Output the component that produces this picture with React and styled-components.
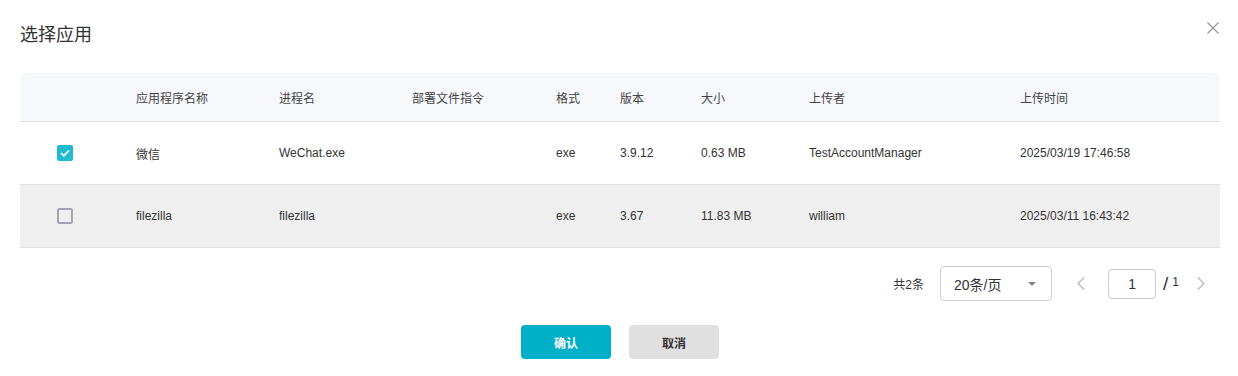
import styled, { createGlobalStyle } from "styled-components";

const GlobalStyle = createGlobalStyle`
  body {
    margin: 0;
    background: #ffffff;
    font-family: "Liberation Sans", Arial, "Noto Sans CJK SC", sans-serif;
    color: #333333;
  }
`;

const Dialog = styled.div`
  width: 1238px;
  box-sizing: border-box;
  padding: 20px 18px 0 20px;
`;

const DialogHeader = styled.div`
  display: flex;
  justify-content: space-between;
  align-items: flex-start;
  margin-bottom: 23px;
`;

const Title = styled.h2`
  margin: 0;
  font-size: 18px;
  font-weight: 400;
  line-height: 30px;
  color: #333333;
`;

const CloseButton = styled.button`
  margin: 2px 1px 0 0;
  padding: 0;
  border: none;
  background: none;
  width: 12px;
  height: 12px;
  display: flex;
  cursor: pointer;
`;

const cols = "116px 143px 133px 144px 64px 81px 108px 211px 1fr";

const Table = styled.div`
  width: 1200px;
  font-size: 12px;
`;

const HeadRow = styled.div`
  display: grid;
  grid-template-columns: ${cols};
  align-items: center;
  height: 48px;
  background: #f7f8fc;
  border-radius: 8px 8px 0 0;
  border-bottom: 1px solid #e0e0e0;
  color: #444444;
`;

const Row = styled.div`
  display: grid;
  grid-template-columns: ${cols};
  align-items: center;
  height: 62px;
  border-bottom: 1px solid #e0e0e0;
  background: ${(p) => (p.$hover ? "#efefef" : "#ffffff")};
  color: #333333;
`;

const CheckCell = styled.div`
  display: flex;
  padding-left: 37px;
`;

const Check = styled.span`
  width: 16px;
  height: 16px;
  box-sizing: border-box;
  border-radius: 2px;
  display: flex;
  align-items: center;
  justify-content: center;
  background: ${(p) => (p.$checked ? "#22bad3" : "transparent")};
  border: ${(p) => (p.$checked ? "none" : "2px solid #a3a3b3")};
`;

const Cell = styled.div`
  white-space: nowrap;
`;

const Pager = styled.div`
  display: flex;
  justify-content: flex-end;
  align-items: center;
  margin-top: 18px;
  padding-right: 15px;
  height: 35px;
  font-size: 12px;
`;

const Total = styled.span`
  margin-right: 16px;
  color: #333333;
`;

const Select = styled.div`
  width: 112px;
  height: 35px;
  box-sizing: border-box;
  border: 1px solid #cccccc;
  border-radius: 4px;
  display: flex;
  align-items: center;
  justify-content: space-between;
  padding: 0 15px 0 13px;
  font-size: 14px;
  color: #333333;
`;

const Caret = styled.span`
  width: 0;
  height: 0;
  border-left: 4px solid transparent;
  border-right: 4px solid transparent;
  border-top: 4px solid #888888;
`;

const Arrow = styled.span`
  display: flex;
  margin: ${(p) => p.$margin};
`;

const PageInput = styled.div`
  width: 48px;
  height: 30px;
  box-sizing: border-box;
  border: 1px solid #cccccc;
  border-radius: 4px;
  display: flex;
  align-items: center;
  justify-content: center;
  font-size: 14px;
  color: #333333;
`;

const PageCount = styled.span`
  margin-left: 7px;
  display: flex;
  align-items: flex-start;
  color: #333333;
`;

const Slash = styled.span`
  font-size: 19px;
  line-height: 20px;
`;

const TotalPages = styled.span`
  font-size: 12px;
  line-height: 12px;
  margin: 2px 0 0 4px;
`;

const Footer = styled.div`
  display: flex;
  justify-content: center;
  gap: 18px;
  margin-top: 24px;
`;

const Button = styled.button`
  width: 90px;
  height: 34px;
  border: none;
  border-radius: 4px;
  font-family: inherit;
  font-size: 12px;
  font-weight: 700;
  cursor: pointer;
  background: ${(p) => (p.$primary ? "#00afc8" : "#e0e0e0")};
  color: ${(p) => (p.$primary ? "#ffffff" : "#333333")};
`;

const rows = [
  {
    checked: true,
    name: "微信",
    proc: "WeChat.exe",
    cmd: "",
    fmt: "exe",
    ver: "3.9.12",
    size: "0.63 MB",
    user: "TestAccountManager",
    time: "2025/03/19 17:46:58",
  },
  {
    checked: false,
    hover: true,
    name: "filezilla",
    proc: "filezilla",
    cmd: "",
    fmt: "exe",
    ver: "3.67",
    size: "11.83 MB",
    user: "william",
    time: "2025/03/11 16:43:42",
  },
];

const headers = ["应用程序名称", "进程名", "部署文件指令", "格式", "版本", "大小", "上传者", "上传时间"];

export default function App() {
  return (
    <Dialog>
      <GlobalStyle />
      <DialogHeader>
        <Title>选择应用</Title>
        <CloseButton aria-label="close">
          <svg width="12" height="12" viewBox="0 0 12 12">
            <path d="M0.5 0.5 L11.5 11.5 M11.5 0.5 L0.5 11.5" stroke="#999" strokeWidth="1.3" fill="none" />
          </svg>
        </CloseButton>
      </DialogHeader>

      <Table>
        <HeadRow>
          <Cell />
          {headers.map((h) => (
            <Cell key={h}>{h}</Cell>
          ))}
        </HeadRow>
        {rows.map((r) => (
          <Row key={r.name} $hover={r.hover}>
            <CheckCell>
              <Check $checked={r.checked}>
                {r.checked && (
                  <svg width="12" height="10" viewBox="0 0 12 10">
                    <path d="M2 5 L4.8 7.8 L10 2.5" stroke="#fff" strokeWidth="1.7" fill="none" />
                  </svg>
                )}
              </Check>
            </CheckCell>
            <Cell>{r.name}</Cell>
            <Cell>{r.proc}</Cell>
            <Cell>{r.cmd}</Cell>
            <Cell>{r.fmt}</Cell>
            <Cell>{r.ver}</Cell>
            <Cell>{r.size}</Cell>
            <Cell>{r.user}</Cell>
            <Cell>{r.time}</Cell>
          </Row>
        ))}
      </Table>

      <Pager>
        <Total>共2条</Total>
        <Select>
          <span>20条/页</span>
          <Caret />
        </Select>
        <Arrow $margin="0 23px 0 25px">
          <svg width="8" height="13" viewBox="0 0 8 13">
            <path d="M7 0.5 L1.2 6.5 L7 12.5" stroke="#bbb" strokeWidth="1.4" fill="none" />
          </svg>
        </Arrow>
        <PageInput>1</PageInput>
        <PageCount>
          <Slash>/</Slash>
          <TotalPages>1</TotalPages>
        </PageCount>
        <Arrow $margin="0 0 0 18px">
          <svg width="8" height="13" viewBox="0 0 8 13">
            <path d="M1 0.5 L6.8 6.5 L1 12.5" stroke="#bbb" strokeWidth="1.4" fill="none" />
          </svg>
        </Arrow>
      </Pager>

      <Footer>
        <Button $primary>确认</Button>
        <Button>取消</Button>
      </Footer>
    </Dialog>
  );
}
